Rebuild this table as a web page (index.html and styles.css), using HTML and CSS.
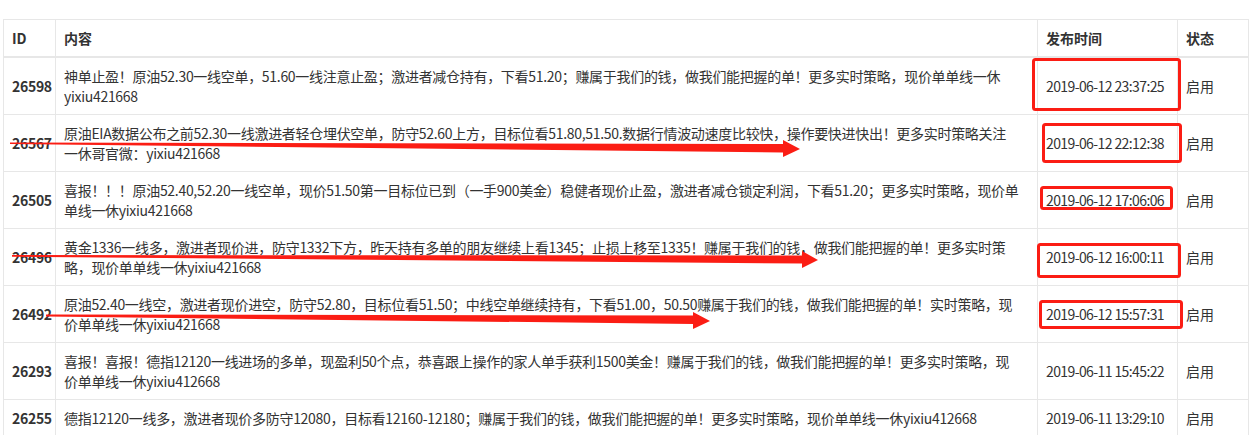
FILE: index.html
```html
<!DOCTYPE html>
<html lang="zh-CN">
<head>
<meta charset="utf-8">
<title>策略列表</title>
<link rel="stylesheet" href="styles.css">
</head>
<body>
<div class="page">
  <table class="list">
    <colgroup>
      <col class="c-id">
      <col class="c-content">
      <col class="c-time">
      <col class="c-status">
    </colgroup>
    <thead>
      <tr><th>ID</th><th>内容</th><th>发布时间</th><th>状态</th></tr>
    </thead>
    <tbody>
      <tr><td class="id">26598</td><td class="content">神单止盈！原油52.30一线空单，51.60一线注意止盈；激进者减仓持有，下看51.20；赚属于我们的钱，做我们能把握的单！更多实时策略，现价单单线一休<br>yixiu421668</td><td class="time">2019-06-12 23:37:25</td><td class="status">启用</td></tr>
      <tr><td class="id">26567</td><td class="content">原油EIA数据公布之前52.30一线激进者轻仓埋伏空单，防守52.60上方，目标位看51.80,51.50.数据行情波动速度比较快，操作要快进快出！更多实时策略关注<br>一休哥官微：yixiu421668</td><td class="time">2019-06-12 22:12:38</td><td class="status">启用</td></tr>
      <tr><td class="id">26505</td><td class="content">喜报！！！原油52.40,52.20一线空单，现价51.50第一目标位已到（一手900美金）稳健者现价止盈，激进者减仓锁定利润，下看51.20；更多实时策略，现价单<br>单线一休yixiu421668</td><td class="time">2019-06-12 17:06:06</td><td class="status">启用</td></tr>
      <tr><td class="id">26496</td><td class="content">黄金1336一线多，激进者现价进，防守1332下方，昨天持有多单的朋友继续上看1345；止损上移至1335！赚属于我们的钱，做我们能把握的单！更多实时策<br>略，现价单单线一休yixiu421668</td><td class="time">2019-06-12 16:00:11</td><td class="status">启用</td></tr>
      <tr><td class="id">26492</td><td class="content">原油52.40一线空，激进者现价进空，防守52.80，目标位看51.50；中线空单继续持有，下看51.00，50.50赚属于我们的钱，做我们能把握的单！实时策略，现<br>价单单线一休yixiu421668</td><td class="time">2019-06-12 15:57:31</td><td class="status">启用</td></tr>
      <tr><td class="id">26293</td><td class="content">喜报！喜报！德指12120一线进场的多单，现盈利50个点，恭喜跟上操作的家人单手获利1500美金！赚属于我们的钱，做我们能把握的单！更多实时策略，现<br>价单单线一休yixiu412668</td><td class="time">2019-06-11 15:45:22</td><td class="status">启用</td></tr>
      <tr><td class="id">26255</td><td class="content">德指12120一线多，激进者现价多防守12080，目标看12160-12180；赚属于我们的钱，做我们能把握的单！更多实时策略，现价单单线一休yixiu412668</td><td class="time">2019-06-11 13:29:10</td><td class="status">启用</td></tr>
    </tbody>
  </table>

  <svg class="marks" width="1249" height="435" viewBox="0 0 1249 435" aria-hidden="true">
    <g class="boxes">
      <rect x="1033.5" y="59.5" width="146" height="50" rx="2"/>
      <rect x="1043.5" y="124.5" width="137" height="37" rx="2"/>
      <rect x="1041.5" y="187.5" width="130" height="21" rx="2"/>
      <rect x="1038.5" y="244.5" width="141" height="32" rx="2"/>
      <rect x="1040.5" y="301.5" width="141" height="26" rx="2"/>
    </g>
    <g class="arrows">
      <polygon points="10,142.5 783,144 783,140 800,149 783,157 783,152.5 10,144"/>
      <polygon points="12,255 802,255.5 802,251 818,260 802,268 802,263.5 12,256.8"/>
      <polygon points="46,314.5 693,315.5 693,312 710,321 693,329 693,324 46,316.5"/>
    </g>
  </svg>
</div>
</body>
</html>
```

FILE: styles.css
```css
html, body {
  margin: 0;
  padding: 0;
  background: #fff;
}

body {
  font-family: "Noto Sans CJK SC", "Noto Sans", sans-serif;
  font-size: 14px;
  line-height: 20px;
  color: #333;
}

.page {
  position: relative;
  padding: 19px 0 0 3px;
  width: 1249px;
  height: 435px;
  box-sizing: border-box;
  overflow: hidden;
}

.list {
  width: 1245px;
  border-collapse: collapse;
  table-layout: fixed;
}

.c-id { width: 52px; }
.c-content { width: 982px; }
.c-time { width: 140px; }
.c-status { width: 71px; }

.list th,
.list td {
  border: 1px solid #e7e7e7;
  padding: 8px;
  vertical-align: middle;
  text-align: left;
}

.list th {
  font-weight: bold;
  border-bottom-width: 2px;
}

.list td.id {
  font-weight: bold;
  letter-spacing: -0.3px;
}

.list td.content {
  vertical-align: top;
  letter-spacing: -0.3px;
  white-space: nowrap;
}

.list td.time {
  white-space: nowrap;
  letter-spacing: -0.6px;
}

.list td.status {
  white-space: nowrap;
}

.marks {
  position: absolute;
  left: 0;
  top: 0;
  pointer-events: none;
}

.boxes rect {
  fill: none;
  stroke: #fb1d14;
  stroke-width: 3;
}

.arrows polygon {
  fill: #fb1d14;
}
```
